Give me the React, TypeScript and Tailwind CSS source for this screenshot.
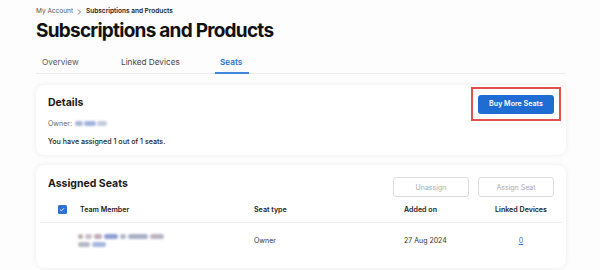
import React from "react";

function Blur({ w, c, className = "" }: { w: number; c: string; className?: string }) {
  return <span className={`inline-block h-[5px] rounded-sm blur-[1.2px] ${className}`} style={{ width: w, background: c }} />;
}

export default function App() {
  return (
    <div className="w-[600px] h-[270px] overflow-hidden bg-[#fdfdfd] text-[#222] pl-[36px] pr-[34px]" style={{ fontFamily: "Inter, 'Noto Sans', sans-serif" }}>
      {/* breadcrumb */}
      <div className="flex items-center h-[21px] pt-[2px] text-[6.5px] leading-none">
        <span className="text-[#555]">My Account</span>
        <svg className="mx-[4px]" width="5" height="6" viewBox="0 0 5 6"><path d="M1 0.5 L3.5 3 L1 5.5" fill="none" stroke="#555" strokeWidth="0.8" /></svg>
        <span className="font-semibold text-[#222]">Subscriptions and Products</span>
      </div>
      <h1 className="text-[19px] font-bold leading-none tracking-[-0.75px] text-[#111] h-[33px] flex items-start pt-0">Subscriptions and Products</h1>
      {/* tabs */}
      <div className="flex border-b border-[#ececec] h-[20px] text-[8.2px] leading-none">
        <div className="w-[79px] pl-[6px] pt-[4px] text-[#555]">Overview</div>
        <div className="w-[100px] pl-[6px] pt-[4px] text-[#444]">Linked Devices</div>
        <div className="relative w-[34px] pl-[5px] pt-[4px] text-[#2a6fd0] font-semibold">
          Seats
          <div className="absolute left-0 right-0 bottom-[-1px] h-[2px] bg-[#3f86e0]" />
        </div>
      </div>
      {/* details card */}
      <div className="mt-[11px] h-[70px] rounded-[8px] bg-white shadow-[0_0_5px_rgba(0,0,0,0.08)] flex justify-between pl-[12px] pr-[5px]">
        <div className="pt-[13px]">
          <div className="text-[10.5px] font-bold leading-none text-[#1a1a1a]">Details</div>
          <div className="mt-[11px] flex items-center text-[7px] leading-none text-[#666]">
            Owner:
            <span className="ml-[3px] flex items-center gap-[1px]">
              <Blur w={8} c="#a9b8d8" />
              <Blur w={12} c="#9fb3e0" />
              <Blur w={10} c="#c3cbdd" />
            </span>
          </div>
          <div className="mt-[11px] text-[7.1px] font-medium leading-none text-[#222]">You have assigned 1 out of 1 seats.</div>
        </div>
        <div className="pt-[2px]">
          <div className="w-[90px] h-[34px] border-2 border-[#e35050] flex items-center justify-center">
            <button className="w-[76px] h-[19px] rounded-[3px] bg-[#1f6dd3] text-white text-[7.1px] font-semibold leading-none">Buy More Seats</button>
          </div>
        </div>
      </div>
      {/* assigned seats card */}
      <div className="mt-[10px] h-[103px] rounded-[8px] bg-white shadow-[0_0_5px_rgba(0,0,0,0.08)] px-[4px]">
        <div className="flex justify-between items-start pl-[8px] pr-[8px] pt-[12px]">
          <div className="mt-[2px] text-[10.5px] font-bold leading-none text-[#1a1a1a]">Assigned Seats</div>
          <div className="flex gap-[9px]">
            <button className="w-[76px] h-[20px] rounded-[3px] border border-[#dcdcdc] text-[7px] text-[#aaa] leading-none">Unassign</button>
            <button className="w-[76px] h-[20px] rounded-[3px] border border-[#dcdcdc] text-[7px] text-[#aaa] leading-none">Assign Seat</button>
          </div>
        </div>
        <div className="grid grid-cols-[40px_174px_150px_76px_82px] items-center h-[26px] border-b border-[#eeeeee] text-[7.1px] font-semibold leading-none text-[#222]">
          <div className="flex justify-center pl-[4px]">
            <span className="w-[9px] h-[9px] rounded-[1.5px] bg-[#2d6fd2] flex items-center justify-center">
              <svg width="6" height="5" viewBox="0 0 6 5"><path d="M1 2.6 L2.4 3.9 L5 1.2" fill="none" stroke="white" strokeWidth="0.8" /></svg>
            </span>
          </div>
          <div>Team Member</div>
          <div>Seat type</div>
          <div>Added on</div>
          <div className="text-center">Linked Devices</div>
        </div>
        <div className="grid grid-cols-[40px_174px_150px_76px_82px] items-center h-[34px] text-[7px] leading-none text-[#333]">
          <div />
          <div className="flex flex-col gap-[3px] -ml-[2px] pt-[1px]">
            <div className="flex items-center gap-[2px]">
              <Blur w={5} c="#b8b0a8" />
              <Blur w={7} c="#c9c0c5" />
              <Blur w={8} c="#c0a8b8" />
              <Blur w={14} c="#8e9ed0" />
              <Blur w={6} c="#b0b8c8" />
              <Blur w={20} c="#a9b0c6" />
              <Blur w={14} c="#b8b4c0" />
            </div>
            <div className="flex items-center gap-[2px]">
              <Blur w={12} c="#b4b8c4" />
              <Blur w={14} c="#a4b8de" />
            </div>
          </div>
          <div>Owner</div>
          <div>27 Aug 2024</div>
          <div className="text-center text-[#2a6fd0] underline">0</div>
        </div>
      </div>
    </div>
  );
}
